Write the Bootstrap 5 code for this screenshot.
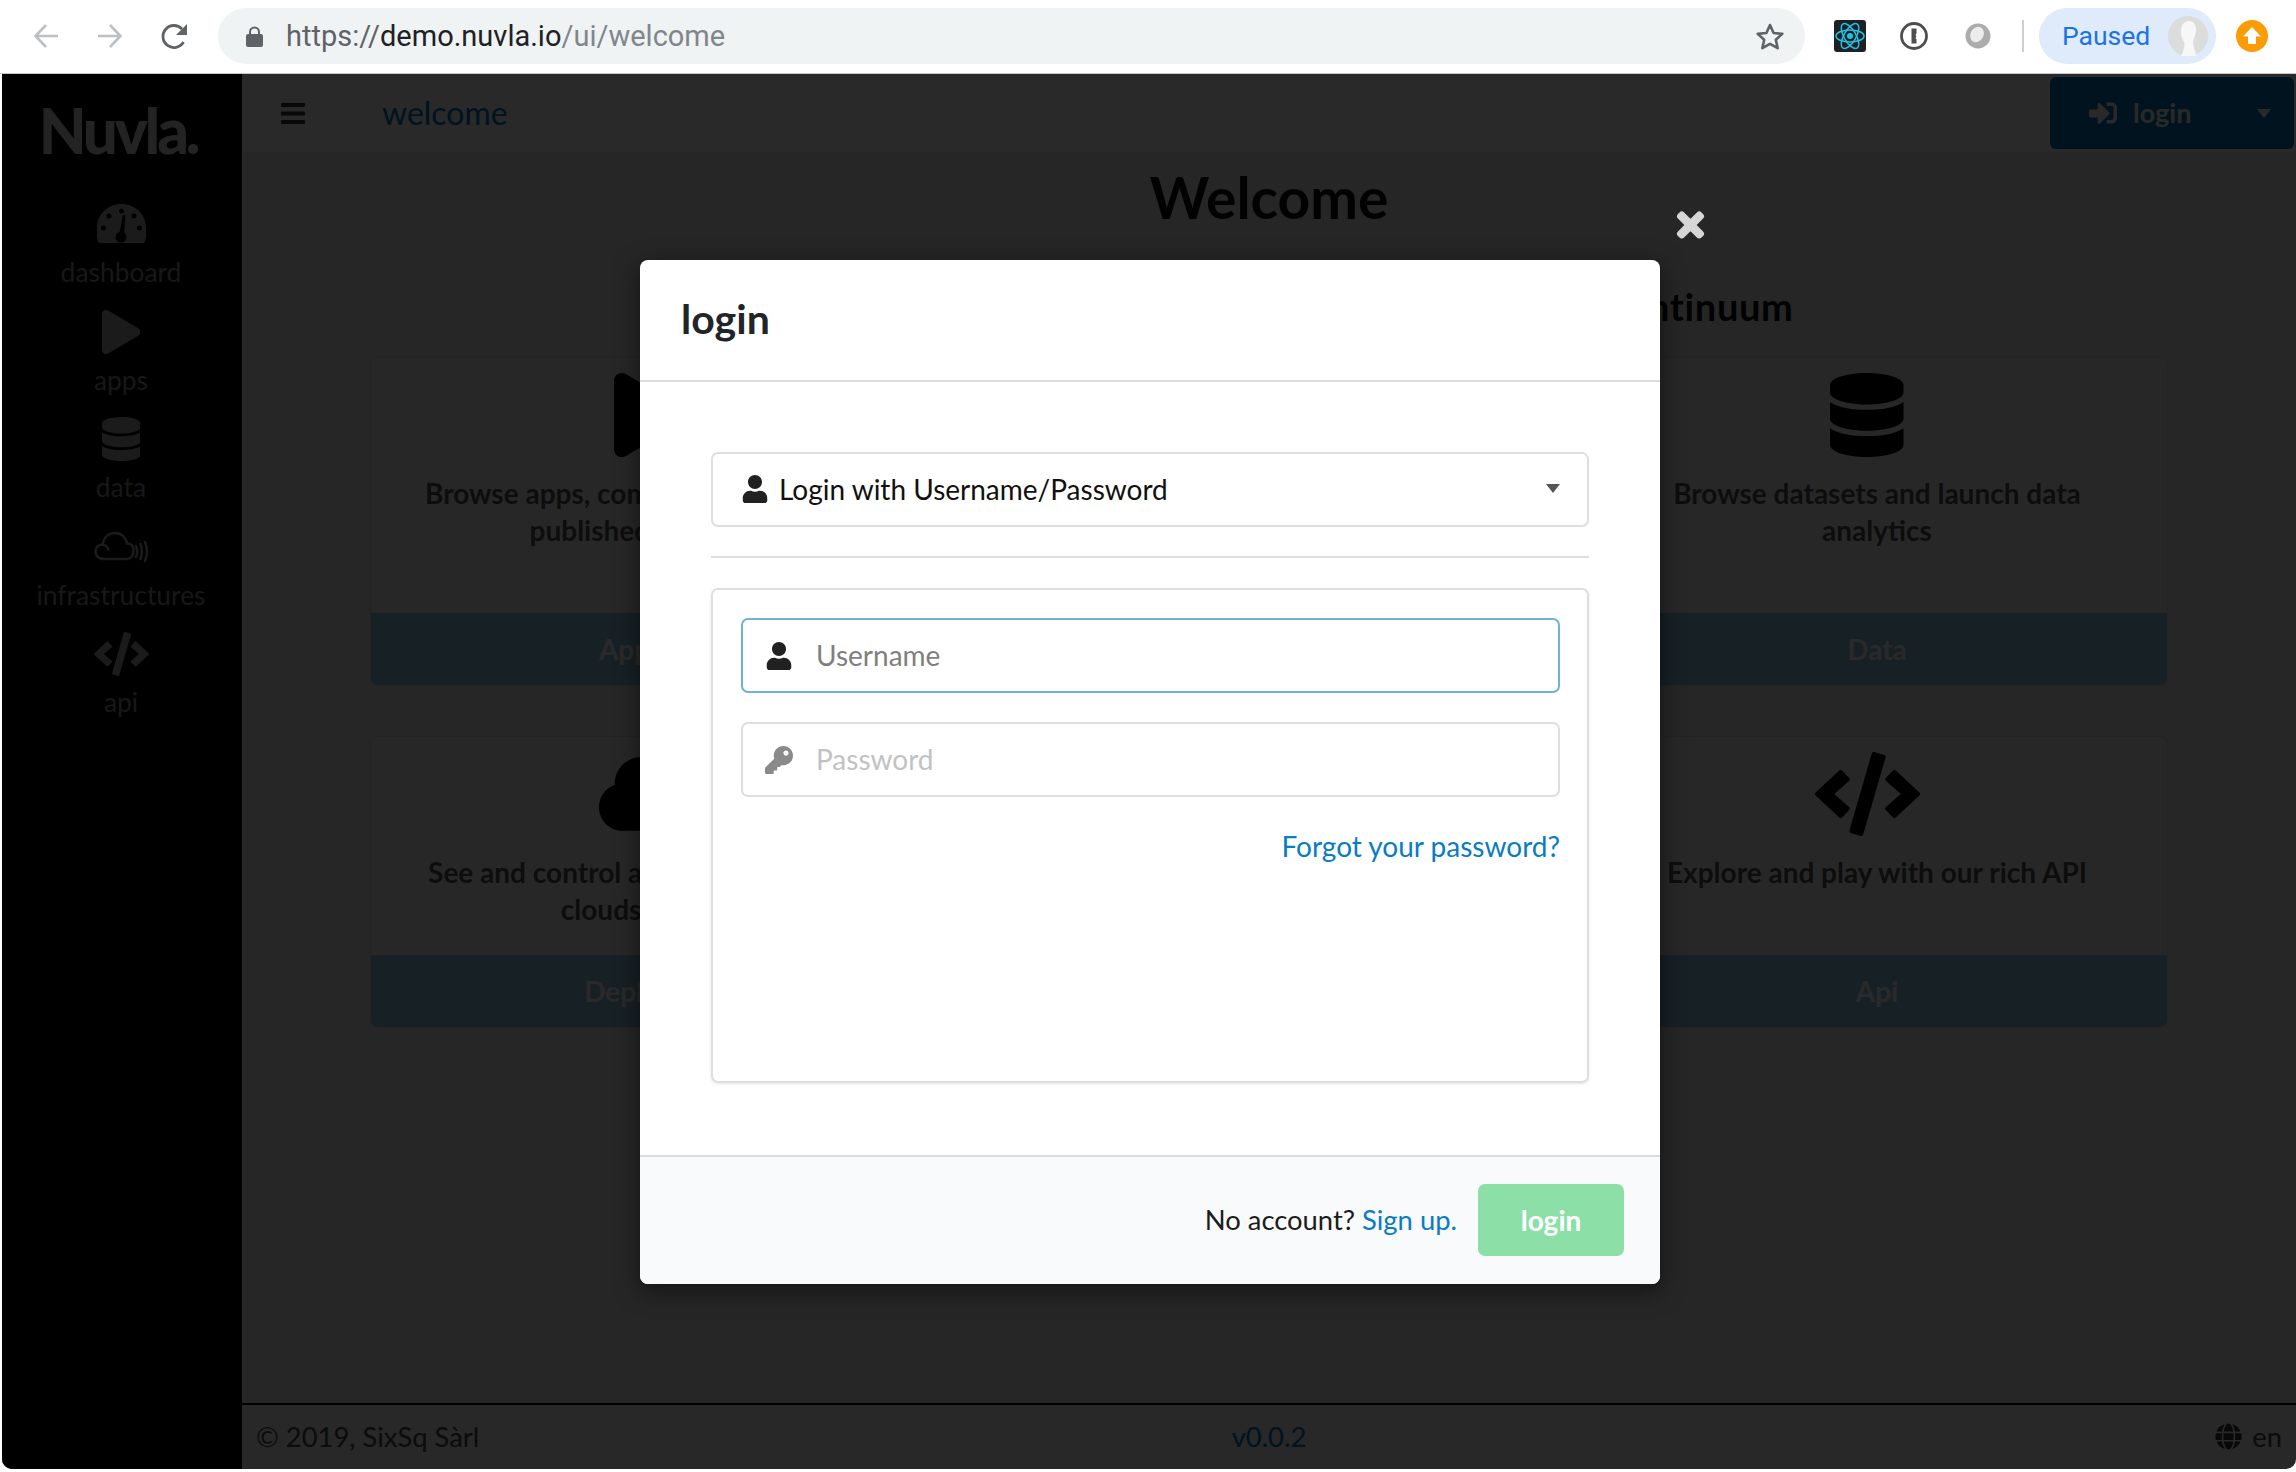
<!DOCTYPE html>
<html lang="en">
<head>
  <meta charset="UTF-8">
  <title>Nuvla - welcome</title>
  <link href="https://cdn.jsdelivr.net/npm/bootstrap@5.3.0/dist/css/bootstrap.min.css" rel="stylesheet">
  <style>
    html, body { height: 100%; }
    body { font-family: "Lato", "Liberation Sans", sans-serif; font-size: 28px; background: #fff; color: #212529; }

    /* browser toolbar */
    .chrome-bar { height: 74px; flex: none; padding: 0 28px 1px 33px; border-bottom: 1px solid #c9c9c9; font-family: "Roboto", "Liberation Sans", sans-serif; }
    .chrome-nav { width: 26px; height: 26px; flex: none; margin-right: 38px; }
    .chrome-reload { width: 27px; height: 27px; flex: none; margin-right: 30px; margin-left: 0; }
    .url-pill { height: 56px; border-radius: 28px; background: #f0f3f4; padding: 0 20px 0 28px; min-width: 0; }
    .url-lock { width: 17px; height: 21px; margin-right: 23px; flex: none; }
    .url-text { font-size: 29px; color: #80868b; letter-spacing: 0; line-height: 1; }
    .url-text .url-scheme { color: #5f6368; }
    .url-text .url-host { color: #202124; }
    .ext-react { width: 32px; height: 32px; margin-left: 29px; flex: none; }
    .ext-key { width: 28px; height: 28px; margin-left: 34px; flex: none; }
    .ext-ball { width: 26px; height: 28px; margin-left: 37px; flex: none; }
    .chrome-sep { width: 2px; height: 32px; background: #cfcfcf; margin: 0 15px 0 31px; flex: none; }
    .paused-pill { width: 177px; height: 56px; border-radius: 28px; background: #dfebfb; color: #1a73e8; font-size: 26.5px; padding: 0 8px 0 23px; flex: none; }
    .paused-face { width: 40px; height: 40px; flex: none; }
    .update-dot { width: 32px; height: 32px; margin-left: 20px; flex: none; }

    /* app behind the dim layer */
    .app-shell { flex: 1 1 auto; min-height: 0; margin: 0 0 3px 2px; border-radius: 0 0 10px 10px; overflow: hidden; }
    .side-rail { width: 240px; flex: none; background: #000; padding-top: 25px; }
    .rail-logo { height: 103px; font-size: 62px; line-height: 62px; font-weight: 900; letter-spacing: -3.2px; color: #d8d8d8; white-space: nowrap; margin-right: 8px; }
    .rail-item { width: 100%; height: 107.6px; color: #8f8f8f; }
    .rail-icon { height: 44px; display: block; fill: #a8a8a8; transform: translateX(-1px); }
    .rail-label { font-size: 26.4px; line-height: 30px; margin-top: 11px; transform: translateX(-1px); }
    .main-col { min-width: 0; background: #ececec; }
    .top-nav { height: 78px; flex: none; background: #fff; padding: 0 2px 0 39px; }
    .burger { width: 24px; height: 21px; margin-right: 77px; }
    .nav-title { color: #0078bf; font-size: 32px; line-height: 1; }
    .btn-nav-login { width: 244px; height: 72px; background: #0078bf; color: #fff; font-size: 27px; font-weight: 700; border: 0; border-radius: 6px; padding: 0 23px 0 39px; }
    .btn-nav-login svg { width: 28px; height: 28px; margin-right: 16px; fill: #fff; }
    .btn-nav-login .caret-down { margin-left: auto; width: 0; height: 0; border: 7px solid transparent; border-top: 9px solid #fff; border-bottom: 0; }
    .welcome-area { padding: 0 128px; min-height: 0; }
    .welcome-title { font-size: 57px; font-weight: 700; line-height: 70px; margin: 10px 0 0; color: #111; }
    .welcome-sub { font-size: 38px; font-weight: 700; line-height: 44px; margin: 52px 0 0; white-space: nowrap; color: #111; letter-spacing: .65px; }
    .tile-grid { display: grid; grid-template-columns: repeat(3, 1fr); grid-template-rows: 329px 292px; gap: 50px 26px; margin-top: 29px; }
    .tile { border-color: #d8d8d8; background: #f2f2f2; border-radius: 8px; overflow: hidden; }
    .tile-body { padding: 15px 4px 0; }
    .tile-icon { height: 84px; display: block; margin: 0 auto 18px; transform: translateX(-10px); fill: #000; }
    .tile-text { font-size: 28px; line-height: 36.5px; font-weight: 700; color: #555; }
    .tile-band { height: 72px; flex: none; background: #90c6e4; color: #fff; font-size: 28px; font-weight: 700; border: 0; border-radius: 0; }
    .page-foot { height: 66px; flex: none; border-top: 2px solid #000; background: #f4f4f4; padding: 0 14px; font-size: 27.4px; color: #4a4a4a; }
    .page-foot .foot-part { flex: 1 1 0; }
    .foot-version { color: #0078bf; }
    .foot-globe { width: 27px; height: 27px; margin-right: 10px; fill: #333; }

    /* dim layer and login dialog */
    .dim-layer { position: absolute; inset: 0; background: rgba(0, 0, 0, .84); }
    .dim-close { position: absolute; left: 1676px; top: 138px; width: 25px; height: 26px; fill: #d6d6d6; stroke: #d6d6d6; stroke-width: 28px; overflow: visible; }
    .login-box { position: absolute; left: 638px; top: 186px; width: 1020px; height: 1024px; background: #fff; border: 0; border-radius: 8px; box-shadow: 0 6px 24px rgba(0, 0, 0, .5); overflow: hidden; }
    .login-head { height: 122px; flex: none; padding: 0 41px 2px; border-bottom: 2px solid #dcdcdc; border-radius: 0; }
    .login-head h5 { font-size: 41px; font-weight: 700; margin: 0; color: #212529; }
    .login-body { padding: 70px 71px 0 71px; }
    .auth-select { height: 75px; width: 100%; border: 2px solid #dedede; border-radius: 7px; padding: 0 27px 2px 28px; font-size: 28px; color: #111; background: #fff; }
    .auth-select::after { margin-left: auto; border-top-color: #555; border-width: 9px 7px 0; }
    .auth-select svg, .field-box svg { width: 28px; height: 28px; flex: none; fill: #212121; }
    .auth-select svg { margin-right: 10px; }
    .auth-rule { margin: 29px 0 30px; border: 0; border-top: 2px solid #dedede; opacity: 1; }
    .auth-panel { height: 495px; border: 2px solid #dedede; border-radius: 7px; padding: 28px 27px 0 28px; box-shadow: 0 1px 3px rgba(0, 0, 0, .1); }
    .field-box { height: 75px; border: 2px solid #dedede; border-radius: 7px; padding: 0 10px 0 22px; margin-bottom: 29px; }
    .field-box.is-focus { border-color: #6fb2d8; }
    .field-box .form-control { border: 0; box-shadow: none; padding: 0 0 2px 23px; font-size: 28px; background: transparent; color: #212529; }
    .field-box .form-control::placeholder { color: #c2c2c2; }
    .field-box.is-focus .form-control::placeholder { color: #7f7f7f; }
    .field-box.is-muted svg { fill: #8a8a8a; }
    .forgot-link, .signup-link { color: #0a7cc1; text-decoration: none; }
    .forgot-row { line-height: 40px; margin-top: 29px; }
    .login-foot { height: 129px; flex: none; padding: 0 36px 2px 0; background: #f9fafb; border-top: 2px solid #dcdcdc; border-radius: 0; font-size: 27.4px; color: #1c1c1c; }
    .login-foot > * { margin: 0; }
    .btn-login-go { width: 146px; height: 72px; margin-left: 21px !important; background: #8ddfa8; color: #fff; font-size: 28px; font-weight: 700; border: 0; border-radius: 7px; padding: 0; }
  </style>
</head>
<body class="d-flex flex-column vh-100 overflow-hidden">

  <!-- browser toolbar -->
  <div class="chrome-bar d-flex align-items-center">
    <svg class="chrome-nav" viewBox="0 0 26 26" fill="none" stroke="#bcc0c4" stroke-width="2.6"><path d="M25 13H3M13 2 2.5 13 13 24"/></svg>
    <svg class="chrome-nav" viewBox="0 0 26 26" fill="none" stroke="#bcc0c4" stroke-width="2.6"><path d="M1 13h22M13 2l10.500 11L13 24"/></svg>
    <svg class="chrome-reload" viewBox="0 0 27 27"><path d="M22.500 19A11 11 0 1 1 21 6" fill="none" stroke="#5f6368" stroke-width="2.800"/><path d="M26 1v11H15z" fill="#5f6368"/></svg>
    <div class="url-pill d-flex align-items-center flex-grow-1">
      <svg class="url-lock" viewBox="0 0 17 21"><path d="M4 9V6a4.500 4.500 0 0 1 9 0v3" fill="none" stroke="#5f6368" stroke-width="2"/><rect y="8" width="17" height="13" rx="2" fill="#5f6368"/></svg>
      <span class="url-text"><span class="url-scheme">https://</span><span class="url-host">demo.nuvla.io</span>/ui/welcome</span>
      <svg class="ms-auto" width="30" height="29" viewBox="0 0 30 29" fill="none" stroke="#5f6368" stroke-width="2.600" stroke-linejoin="round"><path d="M15 3l3.600 8 8.700.9-6.500 5.800 1.900 8.500L15 21.800 7.300 26.200l1.900-8.500-6.500-5.800 8.700-.9z"/></svg>
    </div>
    <svg class="ext-react" viewBox="0 0 32 32"><rect width="32" height="32" rx="3" fill="#1f2023"/><g fill="none" stroke="#1fc3e8" stroke-width="1.500"><ellipse cx="16" cy="16" rx="14" ry="6"/><ellipse cx="16" cy="16" rx="14" ry="6" transform="rotate(60 16 16)"/><ellipse cx="16" cy="16" rx="14" ry="6" transform="rotate(120 16 16)"/></g><circle cx="16" cy="16" r="3" fill="#1fc3e8"/></svg>
    <svg class="ext-key" viewBox="0 0 28 28"><circle cx="14" cy="14" r="12.500" fill="#fff" stroke="#4e4e4e" stroke-width="2.800"/><path d="M11.500 6.500h5v5l-1 1.500 1 1.500-1 1.500 1 1.500v4h-5z" fill="#4e4e4e"/></svg>
    <svg class="ext-ball" viewBox="0 0 26 28"><circle cx="13" cy="14" r="12.500" fill="#acacac"/><ellipse cx="12" cy="12.500" rx="6.500" ry="8" transform="rotate(30 12 12.500)" fill="#ececec"/></svg>
    <div class="chrome-sep"></div>
    <div class="paused-pill d-flex align-items-center justify-content-between">
      <span>Paused</span>
      <svg class="paused-face" viewBox="0 0 40 40"><circle cx="20" cy="20" r="20" fill="#dcdcdc"/><path d="M13 15c0-13 15-13 15-2 0 7-3 10-3 14 0 4 3 8 3 13H13c3-6 4-10 3-14-2-3-3-7-3-11z" fill="#f7f7f7"/></svg>
    </div>
    <svg class="update-dot" viewBox="0 0 32 32"><circle cx="16" cy="16" r="16" fill="#fb9c05"/><path d="M16 7l9 9.500h-5V24h-8v-7.500H7z" fill="#fff"/></svg>
  </div>

  <!-- application -->
  <div class="app-shell d-flex position-relative">
    <aside class="side-rail d-flex flex-column align-items-center">
      <div class="rail-logo">Nuvla.</div>
      <div class="rail-item d-flex flex-column align-items-center">
        <svg class="rail-icon" viewBox="0 0 49 44"><path d="M2 41C-1 36 0 30 0 26 0 12 11 2 24.500 2S49 12 49 26c0 4 1 10-2 15z"/><g fill="#000"><circle cx="24.500" cy="9" r="2.500"/><circle cx="12" cy="14" r="2.500"/><circle cx="37" cy="14" r="2.500"/><circle cx="6.500" cy="26" r="2.500"/><circle cx="42.500" cy="26" r="2.500"/><circle cx="24" cy="35" r="5.500"/><path d="M22 33l4-20 2.500.5L27 33z"/></g></svg>
        <span class="rail-label">dashboard</span>
      </div>
      <div class="rail-item d-flex flex-column align-items-center">
        <svg class="rail-icon" viewBox="0 0 448 512"><path d="M424.4 214.7L72.400 6.600C43.800-10.300 0 6.100 0 47.900V464c0 37.500 40.700 60.100 72.400 41.300l352-208c31.400-18.500 31.500-64.100 0-82.600z"/></svg>
        <span class="rail-label">apps</span>
      </div>
      <div class="rail-item d-flex flex-column align-items-center">
        <svg class="rail-icon" viewBox="0 0 448 512"><path d="M448 73.143v45.714C448 159.143 347.667 192 224 192S0 159.143 0 118.857V73.143C0 32.857 100.333 0 224 0s224 32.857 224 73.143zM448 176v102.857C448 319.143 347.667 352 224 352S0 319.143 0 278.857V176c48.125 33.143 136.208 48.572 224 48.572S399.874 209.143 448 176zm0 160v102.857C448 479.143 347.667 512 224 512S0 479.143 0 438.857V336c48.125 33.143 136.208 48.572 224 48.572S399.874 369.143 448 336z"/></svg>
        <span class="rail-label">data</span>
      </div>
      <div class="rail-item d-flex flex-column align-items-center">
        <svg class="rail-icon" viewBox="0 0 55 44" style="fill:none" stroke="#a8a8a8" stroke-width="2.500" stroke-linecap="round"><path d="M10 34C4 34 1.500 30 1.500 26.500 1.500 22 5 19.500 8.500 19.500 10 12 15 8 21 8c6.500 0 11 4.500 12 10.500 4-.5 6.500 2.500 6.500 6.500 0 5-2.500 9-7 9zM8.500 19.500c3 .5 5 2.500 6 5"/><path d="M42 21c1.500 3.500 1.500 7.500 0 11M46.500 19c2 5 2 10 0 15M51 17c2.500 6 2.500 13 0 19"/></svg>
        <span class="rail-label">infrastructures</span>
      </div>
      <div class="rail-item d-flex flex-column align-items-center">
        <svg class="rail-icon" viewBox="0 0 640 512"><path d="M278.9 511.5l-61-17.700c-6.400-1.800-10-8.500-8.200-14.900L346.200 8.700c1.800-6.400 8.500-10 14.900-8.200l61 17.700c6.400 1.800 10 8.500 8.200 14.900L293.800 503.300c-1.900 6.400-8.500 10.100-14.900 8.200zm-114-112.200l43.500-46.400c4.600-4.900 4.300-12.700-.8-17.200L117 256l90.600-79.700c5.100-4.500 5.500-12.300.8-17.200l-43.500-46.400c-4.500-4.800-12.100-5.100-17-.5L3.800 247.200c-5.100 4.700-5.100 12.800 0 17.500l144.100 135.100c4.900 4.600 12.500 4.400 17-.5zm327.200.6l144.100-135.100c5.100-4.700 5.100-12.800 0-17.500L492.100 112.100c-4.800-4.500-12.400-4.300-17 .5L431.600 159c-4.600 4.900-4.300 12.700.8 17.200L523 256l-90.600 79.700c-5.100 4.500-5.500 12.300-.8 17.200l43.500 46.400c4.500 4.900 12.100 5.100 17 .6z"/></svg>
        <span class="rail-label">api</span>
      </div>
    </aside>

    <div class="main-col d-flex flex-column flex-grow-1">
      <nav class="top-nav d-flex align-items-center">
        <svg class="burger" viewBox="0 0 24 21" fill="#333"><rect width="24" height="4" rx="1"/><rect y="8.500" width="24" height="4" rx="1"/><rect y="17" width="24" height="4" rx="1"/></svg>
        <span class="nav-title">welcome</span>
        <button class="btn btn-nav-login d-flex align-items-center ms-auto" type="button">
          <svg viewBox="0 0 512 512"><path d="M416 448h-84c-6.600 0-12-5.400-12-12v-40c0-6.600 5.400-12 12-12h84c17.700 0 32-14.300 32-32V160c0-17.700-14.300-32-32-32h-84c-6.600 0-12-5.400-12-12V76c0-6.600 5.400-12 12-12h84c53 0 96 43 96 96v192c0 53-43 96-96 96zm-47-201L201 79c-15-15-41-4.500-41 17v96H24c-13.300 0-24 10.700-24 24v96c0 13.300 10.700 24 24 24h136v96c0 21.500 26 32 41 17l168-168c9.300-9.400 9.300-24.600 0-34z"/></svg>
          login
          <span class="caret-down"></span>
        </button>
      </nav>

      <main class="welcome-area flex-grow-1 text-center overflow-hidden">
        <h1 class="welcome-title">Welcome</h1>
        <h2 class="welcome-sub">Start deploying apps and containers on the cloud continuum</h2>
        <div class="tile-grid">
          <div class="card tile">
            <div class="tile-body flex-grow-1">
              <svg class="tile-icon" viewBox="0 0 448 512"><path d="M424.4 214.7L72.400 6.600C43.800-10.300 0 6.100 0 47.900V464c0 37.500 40.700 60.100 72.400 41.300l352-208c31.400-18.500 31.500-64.100 0-82.600z"/></svg>
              <div class="tile-text">Browse apps, components and images<br>published by vendors</div>
            </div>
            <button class="btn tile-band" type="button">App Store</button>
          </div>
          <div class="card tile">
            <div class="tile-body flex-grow-1">
              <div class="tile-text">Your running workloads</div>
            </div>
            <button class="btn tile-band" type="button">Dashboard</button>
          </div>
          <div class="card tile">
            <div class="tile-body flex-grow-1">
              <svg class="tile-icon" viewBox="0 0 448 512"><path d="M448 73.143v45.714C448 159.143 347.667 192 224 192S0 159.143 0 118.857V73.143C0 32.857 100.333 0 224 0s224 32.857 224 73.143zM448 176v102.857C448 319.143 347.667 352 224 352S0 319.143 0 278.857V176c48.125 33.143 136.208 48.572 224 48.572S399.874 209.143 448 176zm0 160v102.857C448 479.143 347.667 512 224 512S0 479.143 0 438.857V336c48.125 33.143 136.208 48.572 224 48.572S399.874 369.143 448 336z"/></svg>
              <div class="tile-text">Browse datasets and launch data<br>analytics</div>
            </div>
            <button class="btn tile-band" type="button">Data</button>
          </div>
          <div class="card tile">
            <div class="tile-body flex-grow-1">
              <svg class="tile-icon" viewBox="0 0 640 512"><path d="M537.6 226.6c4.100-10.700 6.400-22.400 6.400-34.600 0-53-43-96-96-96-19.700 0-38.100 6-53.300 16.200C367 64.200 315.300 32 256 32c-88.400 0-160 71.600-160 160 0 2.700.1 5.400.2 8.100C40.200 219.800 0 273.200 0 336c0 79.500 64.500 144 144 144h368c70.700 0 128-57.300 128-128 0-61.900-44-113.600-102.400-125.400z"/></svg>
              <div class="tile-text">See and control all your containers on<br>clouds and edge</div>
            </div>
            <button class="btn tile-band" type="button">Deployment</button>
          </div>
          <div class="card tile">
            <div class="tile-body flex-grow-1">
              <div class="tile-text">Your edge devices</div>
            </div>
            <button class="btn tile-band" type="button">Edge</button>
          </div>
          <div class="card tile">
            <div class="tile-body flex-grow-1">
              <svg class="tile-icon" viewBox="0 0 640 512"><path d="M278.9 511.5l-61-17.700c-6.400-1.800-10-8.500-8.200-14.900L346.200 8.700c1.800-6.400 8.500-10 14.900-8.200l61 17.700c6.400 1.800 10 8.500 8.200 14.900L293.800 503.300c-1.900 6.400-8.500 10.100-14.900 8.200zm-114-112.200l43.500-46.400c4.600-4.900 4.300-12.700-.8-17.200L117 256l90.600-79.700c5.100-4.500 5.500-12.300.8-17.200l-43.500-46.400c-4.500-4.800-12.100-5.100-17-.5L3.800 247.200c-5.100 4.700-5.100 12.800 0 17.500l144.100 135.100c4.900 4.600 12.500 4.400 17-.5zm327.200.6l144.100-135.100c5.100-4.700 5.100-12.800 0-17.500L492.100 112.100c-4.800-4.500-12.400-4.300-17 .5L431.600 159c-4.600 4.900-4.300 12.700.8 17.200L523 256l-90.600 79.700c-5.100 4.500-5.500 12.300-.8 17.200l43.500 46.400c4.500 4.900 12.100 5.100 17 .6z"/></svg>
              <div class="tile-text">Explore and play with our rich API</div>
            </div>
            <button class="btn tile-band" type="button">Api</button>
          </div>
        </div>
      </main>

      <footer class="page-foot d-flex align-items-center">
        <div class="foot-part">&copy; 2019, SixSq Sàrl</div>
        <div class="foot-part text-center foot-version">v0.0.2</div>
        <div class="foot-part d-flex align-items-center justify-content-end">
          <svg class="foot-globe" viewBox="0 0 496 512"><path d="M336.5 160C322 70.700 287.800 8 248 8s-74 62.700-88.500 152h177zM152 256c0 22.200 1.200 43.500 3.300 64h185.300c2.100-20.500 3.300-41.800 3.300-64s-1.200-43.500-3.300-64H155.300c-2.100 20.500-3.300 41.800-3.300 64zm324.700-96c-28.600-67.900-86.500-120.400-158-141.600 24.400 33.800 41.200 84.700 50 141.600h108zM177.200 18.400C105.800 39.600 47.800 92.100 19.300 160h108c8.700-56.900 25.500-107.800 49.900-141.600zM487.400 192H372.700c2.100 21 3.300 42.500 3.300 64s-1.200 43-3.300 64h114.600c5.500-20.500 8.600-41.800 8.600-64s-3.100-43.500-8.500-64zM120 256c0-21.500 1.200-43 3.300-64H8.600C3.200 212.500 0 233.800 0 256s3.200 43.500 8.600 64h114.600c-2-21-3.200-42.500-3.200-64zm39.500 96c14.500 89.300 48.700 152 88.500 152s74-62.700 88.500-152h-177zm159.300 141.600c71.400-21.200 129.400-73.700 158-141.600h-108c-8.800 56.900-25.600 107.800-50 141.600zM19.300 352c28.600 67.900 86.500 120.400 158 141.600-24.400-33.800-41.200-84.700-50-141.600h-108z"/></svg>
          en
        </div>
      </footer>
    </div>

    <!-- modal over everything -->
    <div class="dim-layer">
      <svg class="dim-close" viewBox="0 74 352 364" preserveAspectRatio="none"><path d="M242.72 256l100.070-100.070c12.280-12.280 12.280-32.190 0-44.480l-22.240-22.240c-12.280-12.280-32.190-12.280-44.480 0L176 189.280 75.930 89.210c-12.280-12.280-32.190-12.280-44.480 0L9.210 111.450c-12.280 12.280-12.280 32.190 0 44.480L109.280 256 9.210 356.070c-12.280 12.280-12.280 32.190 0 44.480l22.240 22.240c12.280 12.280 32.200 12.280 44.480 0L176 322.720l100.070 100.070c12.280 12.280 32.200 12.280 44.480 0l22.240-22.240c12.280-12.280 12.280-32.190 0-44.480L242.720 256z"/></svg>
      <div class="modal-content login-box">
        <div class="modal-header login-head">
          <h5 class="modal-title">login</h5>
        </div>
        <div class="modal-body login-body">
          <button class="btn dropdown-toggle auth-select d-flex align-items-center" type="button">
            <svg viewBox="0 0 448 512"><path d="M224 256c70.700 0 128-57.300 128-128S294.700 0 224 0 96 57.300 96 128s57.300 128 128 128zm89.600 32h-16.700c-22.200 10.200-46.900 16-72.900 16s-50.600-5.800-72.900-16h-16.700C60.200 288 0 348.200 0 422.400V464c0 26.500 21.500 48 48 48h352c26.500 0 48-21.500 48-48v-41.600c0-74.200-60.200-134.400-134.400-134.400z"/></svg>
            Login with Username/Password
          </button>
          <hr class="auth-rule">
          <div class="auth-panel">
            <div class="field-box is-focus d-flex align-items-center">
              <svg viewBox="0 0 448 512"><path d="M224 256c70.700 0 128-57.300 128-128S294.700 0 224 0 96 57.300 96 128s57.300 128 128 128zm89.600 32h-16.700c-22.200 10.200-46.900 16-72.900 16s-50.600-5.800-72.900-16h-16.700C60.200 288 0 348.200 0 422.400V464c0 26.500 21.500 48 48 48h352c26.500 0 48-21.500 48-48v-41.600c0-74.200-60.200-134.400-134.400-134.400z"/></svg>
              <input class="form-control" type="text" placeholder="Username">
            </div>
            <div class="field-box is-muted d-flex align-items-center">
              <svg viewBox="0 0 512 512"><path d="M512 176.001C512 273.203 433.202 352 336 352c-11.220 0-22.190-1.062-32.827-3.069l-24.012 27.014A23.999 23.999 0 0 1 261.223 384H224v40c0 13.255-10.745 24-24 24h-40v40c0 13.255-10.745 24-24 24H24c-13.255 0-24-10.745-24-24v-78.059c0-6.365 2.529-12.470 7.029-16.971l161.802-161.802C163.108 213.814 160 195.271 160 176 160 78.798 238.797.001 335.999 0 433.488-.001 512 78.511 512 176.001zM336 128c0 26.510 21.490 48 48 48s48-21.490 48-48-21.490-48-48-48-48 21.490-48 48z"/></svg>
              <input class="form-control" type="password" placeholder="Password">
            </div>
            <div class="forgot-row text-end"><a class="forgot-link" href="#">Forgot your password?</a></div>
          </div>
        </div>
        <div class="modal-footer login-foot">
          <span>No account? <a class="signup-link" href="#">Sign up.</a></span>
          <button class="btn btn-login-go" type="button">login</button>
        </div>
      </div>
    </div>
  </div>

  <script src="https://cdn.jsdelivr.net/npm/bootstrap@5.3.0/dist/js/bootstrap.bundle.min.js"></script>
</body>
</html>
